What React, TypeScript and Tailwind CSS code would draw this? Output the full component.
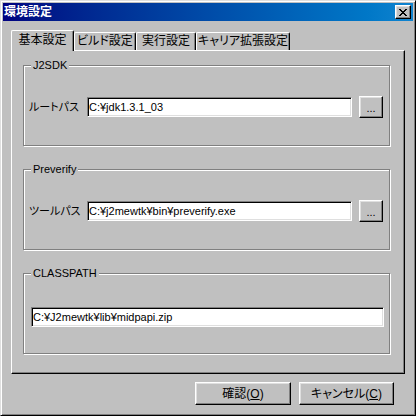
import React from "react";

const JP = "text-[12px] [font-feature-settings:'palt']";

const raised =
    "border border-t-white border-l-white border-r-black border-b-black shadow-[inset_-1px_-1px_0_#808080,inset_1px_1px_0_#dfdfdf] bg-[#c0c0c0]";
const sunken =
    "border border-t-[#808080] border-l-[#808080] border-r-white border-b-white shadow-[inset_1px_1px_0_#000,inset_-1px_-1px_0_#dfdfdf] bg-white";

function CloseGlyph() {
    const cells: [number, number, number][] = [
        [0, 0, 2], [6, 0, 2],
        [1, 1, 2], [5, 1, 2],
        [2, 2, 4],
        [3, 3, 2],
        [2, 4, 4],
        [1, 5, 2], [5, 5, 2],
        [0, 6, 2], [6, 6, 2],
    ];
    return (
        <svg width="8" height="7" viewBox="0 0 8 7" shapeRendering="crispEdges">
            {cells.map(([x, y, w], i) => <rect key={i} x={x} y={y} width={w} height={1} fill="#000" />)}
        </svg>
    );
}

function GroupBox({ title, className, children }: { title: string; className?: string; children: React.ReactNode }) {
    return (
        <div className={`relative w-[367px] h-[81px] border border-[#808080] shadow-[1px_1px_0_#fff,inset_1px_1px_0_#fff] ${className ?? ""}`}>
            <span className="absolute -top-[8px] left-[7px] px-[2px] bg-[#c0c0c0] text-[11px] leading-[14px]">{title}</span>
            {children}
        </div>
    );
}

function PathRow({ label, value }: { label: string; value: string }) {
    return (
        <div className="flex items-center pt-[30px] pl-[5px]">
            <span className="w-[58px] text-[11px] [font-feature-settings:'palt'] leading-[14px] whitespace-nowrap">{label}</span>
            <div className={`w-[265px] h-[20px] pl-[1px] text-[11px] leading-[18px] ${sunken}`}>{value}</div>
            <button className={`ml-[7px] w-[24px] h-[22px] text-[11px] leading-[14px] pt-[2px] ${raised}`}>...</button>
        </div>
    );
}

const TABS = [
    { label: "基本設定", w: "w-[63px]", active: true },
    { label: "ビルド設定", w: "w-[62px]", active: false },
    { label: "実行設定", w: "w-[60px]", active: false },
    { label: "キャリア拡張設定", w: "w-[94px]", active: false },
];

export default function App() {
    return (
        <div className="w-[416px] h-[416px] bg-[#c0c0c0] text-black font-['Liberation_Sans','Noto_Sans_CJK_JP',sans-serif] border border-t-[#dfdfdf] border-l-[#dfdfdf] border-r-black border-b-black shadow-[inset_1px_1px_0_#fff,inset_-1px_-1px_0_#808080] p-[2px] flex flex-col">
            {/* title bar */}
            <div className="h-[18px] flex items-center justify-between bg-gradient-to-r from-[#000080] to-[#1084d0] pl-[1px] pr-[2px]">
                <span className={`${JP} font-bold text-white leading-[14px]`}>環境設定</span>
                <button className={`w-[16px] h-[14px] flex items-center justify-center ${raised}`}>
                    <CloseGlyph />
                </button>
            </div>

            {/* tabs */}
            <div className="mt-[9px] h-[20px] pl-[8px] flex items-end">
                {TABS.map(t => (
                    <div key={t.label}
                        className={`${t.w} flex justify-center bg-[#c0c0c0] border-t border-l border-r border-t-white border-l-white border-r-black rounded-tl-[2px] rounded-tr-[2px] shadow-[inset_-1px_0_0_#808080] ${t.active ? "relative z-10 h-[21px] -mb-px pt-[2px]" : "h-[18px] pt-[1px]"}`}>
                        <span className={`${JP} leading-[14px] whitespace-nowrap`}>{t.label}</span>
                    </div>
                ))}
            </div>

            {/* tab panel */}
            <div className="ml-[8px] w-[394px] h-[324px] border border-t-white border-l-white border-r-black border-b-black shadow-[inset_-1px_-1px_0_#808080] pt-[14px] pl-[11px] flex flex-col">
                <GroupBox title="J2SDK">
                    <PathRow label="ルートパス" value="C:¥jdk1.3.1_03" />
                </GroupBox>
                <GroupBox title="Preverify" className="mt-[23px]">
                    <PathRow label="ツールパス" value="C:¥j2mewtk¥bin¥preverify.exe" />
                </GroupBox>
                <GroupBox title="CLASSPATH" className="mt-[23px]">
                    <div className="pt-[33px] pl-[7px]">
                        <div className={`w-[353px] h-[20px] pl-[1px] text-[11px] leading-[18px] ${sunken}`}>C:¥J2mewtk¥lib¥midpapi.zip</div>
                    </div>
                </GroupBox>
            </div>

            {/* buttons */}
            <div className="mt-[8px] pr-[19px] flex justify-end gap-[8px]">
                <button className={`w-[96px] h-[23px] ${JP} leading-[14px] ${raised}`}>
                    確認(<span className="underline">O</span>)
                </button>
                <button className={`w-[95px] h-[23px] ${JP} leading-[14px] ${raised}`}>
                    キャンセル(<span className="underline">C</span>)
                </button>
            </div>
        </div>
    );
}
